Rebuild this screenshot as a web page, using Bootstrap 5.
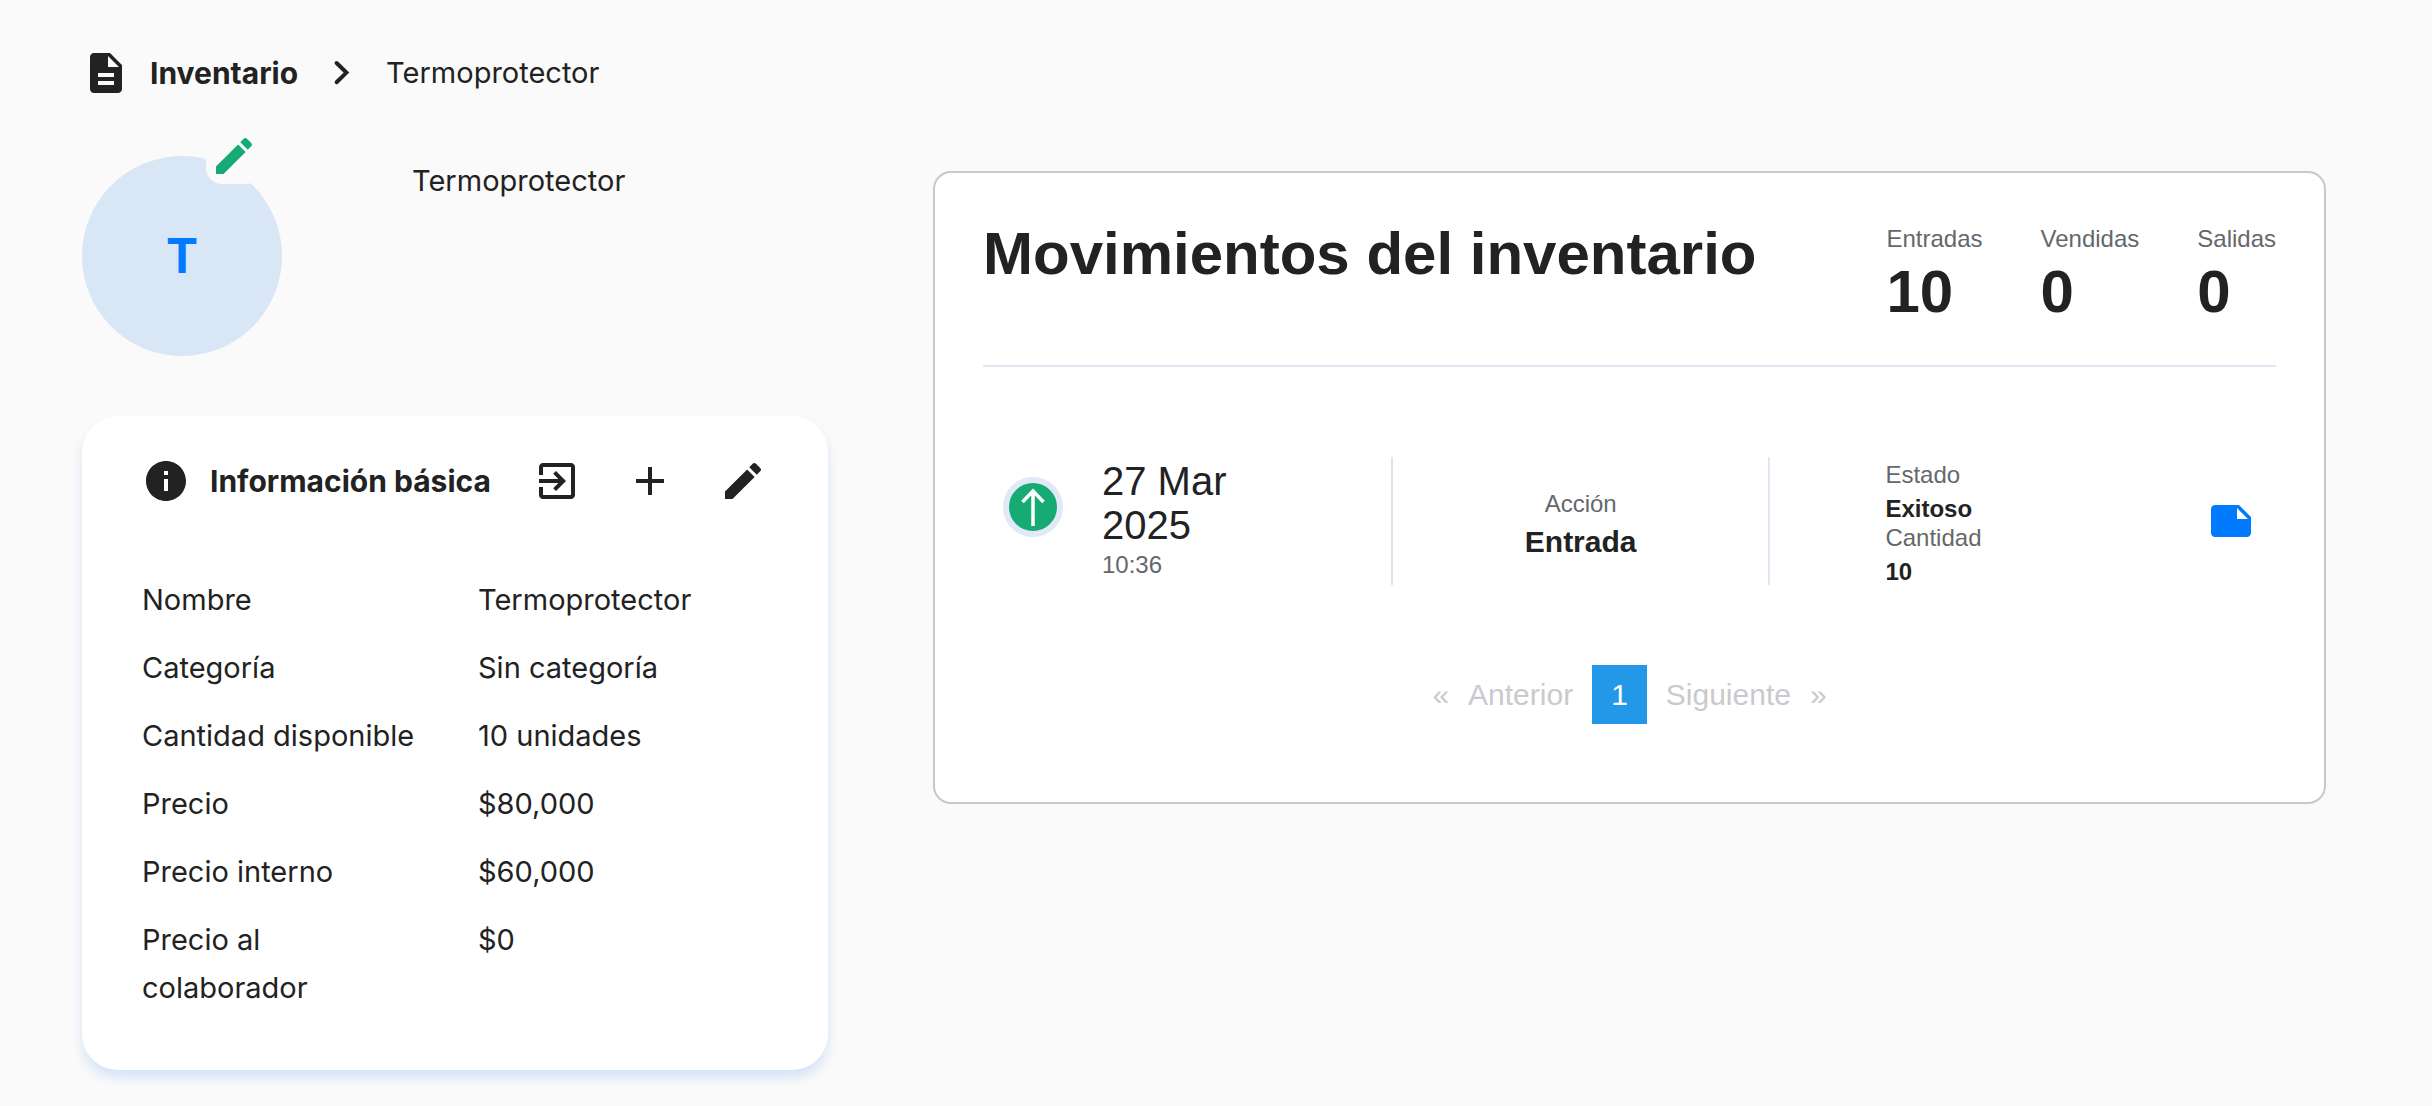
<!DOCTYPE html>
<html lang="es">
<head>
<meta charset="utf-8">
<meta name="viewport" content="width=device-width, initial-scale=1">
<title>Inventario - Termoprotector</title>
<link href="https://cdn.jsdelivr.net/npm/bootstrap@5.3.0/dist/css/bootstrap.min.css" rel="stylesheet">
<style>
  body { background: #fafafa; color: #222; font-family: Inter, "Liberation Sans", sans-serif; font-size: 29px; line-height: 48px; }
  .page { padding: 48px 106px 32px 82px; }
  .ico { width: 48px; height: 48px; fill: currentColor; display: block; flex: none; }
  .crumbs { gap: 20px; margin-bottom: 58px; line-height: 50px; }
  .crumbs a { color: inherit; text-decoration: none; }
  .strong-text { font-size: 30px; font-weight: 700; line-height: 50px; }
  .plain-btn { padding: 0; border: 0; background: none; color: inherit; }
  .profile { gap: 130px; margin-bottom: 60px; line-height: 50px; }
  .avatar { width: 200px; height: 200px; background: #d9e6f5; color: #007bff; font-size: 48px; flex: none; }
  .avatar-edit { top: -28px; right: 20px; padding: 4px; border-radius: 16px; background: #fafafa; color: #16ab74; }
  .info-card { border-radius: 36px; padding: 40px 61px 58px 60px; box-shadow: 0 8px 12px #d5e4f6; margin-right: 2px; }
  .info-head { gap: 20px; margin-bottom: 70px; }
  .info-actions { gap: 45px; }
  .data-list { gap: 20px; }
  .data-list dt { width: 336px; padding-right: 56px; }
  .moves-col { padding: 15px 0 0 103px; font-family: "Liberation Sans", Arial, sans-serif; }
  .moves { border: 2px solid #c8c8c8; border-radius: 18px; padding: 51px 48px 78px; }
  .moves-head { border-bottom: 2px solid #dfe7f1; padding-bottom: 43px; margin-bottom: 90px; }
  .big { font-size: 60px; line-height: 60px; font-weight: 700; }
  .stats { gap: 58px; }
  .tag-label { font-size: 24px; line-height: 30px; color: #65686b; }
  .stats .tag-label { margin-bottom: 8px; }
  .move { min-height: 128px; }
  .part-date { width: 31.7%; gap: 39px; padding-left: 20px; border-right: 2px solid #d5e5f3; }
  .part-action { width: 29.2%; padding-top: 9px; gap: 3px; border-right: 2px solid #dfe8f2; }
  .part-state { width: 39.1%; padding: 0 21px 0 115px; }
  .arrow { width: 60px; height: 60px; margin-top: 20px; border: 6px solid #e0e9f5; background: #16ab74; color: #fff; flex: none; }
  .day { font-size: 40px; line-height: 44px; }
  .hour { line-height: 36px; }
  .action-name { font-size: 30px; line-height: 40px; }
  .state-group { gap: 5px; padding-top: 4px; }
  .state-list { gap: 10px; font-size: 24px; line-height: 24px; }
  .state-list .tag-label { line-height: 24px; }
  .note { color: #007bff; }
  .pager { gap: 20px; margin-top: 80px; }
  .pager .page-link { padding: 0; border: 0; background: none; color: #c8cacd; font-size: 30px; line-height: 59px; }
  .pager .active .page-link { padding: 0 19px; background: #2398e9; color: #fff; }
</style>
</head>
<body>
<main class="container-fluid page">
  <nav class="crumbs d-flex align-items-center" aria-label="Ruta">
    <svg class="ico" viewBox="0 0 24 24"><path d="M14 2H6c-1.100 0-2 .9-2 2v16c0 1.100.890 2 1.990 2H18c1.100 0 2-.9 2-2V8l-6-6zm2 16H8v-2h8v2zm0-4H8v-2h8v2zm-3-5V3.500L18.500 9H13z"/></svg>
    <a class="strong-text" href="#">Inventario</a>
    <svg class="ico" viewBox="0 0 24 24"><path d="M9.300 7l4.900 4.800-4.900 4.800" fill="none" stroke="currentColor" stroke-width="2" stroke-linecap="round"/></svg>
    <span>Termoprotector</span>
  </nav>

  <div class="row g-0">
    <section class="col-4">
      <div class="profile d-flex">
        <div class="avatar position-relative rounded-circle d-flex align-items-center justify-content-center fw-bold">T
          <button type="button" class="plain-btn avatar-edit position-absolute" aria-label="Editar imagen">
            <svg class="ico" viewBox="0 0 24 24"><path d="M3 17.250V21h3.750L17.810 9.940l-3.750-3.750L3 17.250zM20.710 7.040c.39-.39.39-1.020 0-1.410l-2.340-2.340c-.39-.39-1.020-.39-1.410 0l-1.830 1.830 3.750 3.750 1.830-1.830z"/></svg>
          </button>
        </div>
        <div>Termoprotector</div>
      </div>

      <div class="info-card bg-white">
        <div class="info-head d-flex align-items-center">
          <svg class="ico" viewBox="0 0 24 24"><path d="M12 2C6.480 2 2 6.480 2 12s4.480 10 10 10 10-4.480 10-10S17.520 2 12 2zm1 15h-2v-6h2v6zm0-8h-2V7h2v2z"/></svg>
          <span class="strong-text">Información básica</span>
          <div class="info-actions d-flex ms-auto">
            <button type="button" class="plain-btn" aria-label="Salida"><svg class="ico" viewBox="0 0 24 24"><path d="M10.090 15.590L11.500 17l5-5-5-5-1.410 1.410L12.670 11H3v2h9.670l-2.580 2.590zM19 3H5c-1.110 0-2 .9-2 2v4h2V5h14v14H5v-4H3v4c0 1.100.890 2 2 2h14c1.100 0 2-.9 2-2V5c0-1.100-.9-2-2-2z"/></svg></button>
            <button type="button" class="plain-btn" aria-label="Agregar"><svg class="ico" viewBox="0 0 24 24"><path d="M19 13h-6v6h-2v-6H5v-2h6V5h2v6h6v2z"/></svg></button>
            <button type="button" class="plain-btn" aria-label="Editar"><svg class="ico" viewBox="0 0 24 24"><path d="M3 17.250V21h3.750L17.810 9.940l-3.750-3.750L3 17.250zM20.710 7.040c.39-.39.39-1.020 0-1.410l-2.340-2.340c-.39-.39-1.020-.39-1.410 0l-1.830 1.830 3.750 3.750 1.830-1.830z"/></svg></button>
          </div>
        </div>
        <dl class="data-list d-flex flex-column mb-0">
          <div class="d-flex"><dt class="fw-normal">Nombre</dt><dd class="mb-0">Termoprotector</dd></div>
          <div class="d-flex"><dt class="fw-normal">Categoría</dt><dd class="mb-0">Sin categoría</dd></div>
          <div class="d-flex"><dt class="fw-normal">Cantidad disponible</dt><dd class="mb-0">10 unidades</dd></div>
          <div class="d-flex"><dt class="fw-normal">Precio</dt><dd class="mb-0">$80,000</dd></div>
          <div class="d-flex"><dt class="fw-normal">Precio interno</dt><dd class="mb-0">$60,000</dd></div>
          <div class="d-flex"><dt class="fw-normal">Precio al colaborador</dt><dd class="mb-0">$0</dd></div>
        </dl>
      </div>
    </section>

    <section class="col-8 moves-col">
      <div class="moves bg-white">
        <div class="moves-head d-flex justify-content-between">
          <h1 class="big mb-0">Movimientos del inventario</h1>
          <div class="stats d-flex">
            <div><div class="tag-label">Entradas</div><div class="big">10</div></div>
            <div><div class="tag-label">Vendidas</div><div class="big">0</div></div>
            <div><div class="tag-label">Salidas</div><div class="big">0</div></div>
          </div>
        </div>

        <div class="move d-flex">
          <div class="part-date d-flex">
            <div class="arrow rounded-circle">
              <svg class="ico" viewBox="0 0 48 48"><path d="M24 43V9M13.500 19L24 8l10.500 11" fill="none" stroke="currentColor" stroke-width="3.500"/></svg>
            </div>
            <div class="align-self-center">
              <div class="day">27 Mar<br>2025</div>
              <div class="tag-label hour">10:36</div>
            </div>
          </div>
          <div class="part-action d-flex flex-column justify-content-center align-items-center">
            <div class="tag-label">Acción</div>
            <div class="action-name fw-bold">Entrada</div>
          </div>
          <div class="part-state d-flex align-items-center justify-content-between">
            <div class="state-group d-flex flex-column">
              <div class="state-list d-flex flex-column"><span class="tag-label">Estado</span><span class="fw-bold">Exitoso</span></div>
              <div class="state-list d-flex flex-column"><span class="tag-label">Cantidad</span><span class="fw-bold">10</span></div>
            </div>
            <button type="button" class="plain-btn note" aria-label="Nota"><svg class="ico" viewBox="0 0 24 24"><path d="M22 10l-6-6H4c-1.100 0-2 .9-2 2v12.010c0 1.100.9 1.990 2 1.990l16-.01c1.100 0 2-.89 2-1.990v-8zm-7-4.500l5.500 5.500H15V5.500z"/></svg></button>
          </div>
        </div>

        <nav aria-label="Paginación">
          <ul class="pager pagination justify-content-center mb-0">
            <li class="page-item"><a class="page-link" href="#" aria-label="Primera">«</a></li>
            <li class="page-item"><a class="page-link" href="#">Anterior</a></li>
            <li class="page-item active"><a class="page-link" href="#">1</a></li>
            <li class="page-item"><a class="page-link" href="#">Siguiente</a></li>
            <li class="page-item"><a class="page-link" href="#" aria-label="Última">»</a></li>
          </ul>
        </nav>
      </div>
    </section>
  </div>
</main>
<script src="https://cdn.jsdelivr.net/npm/bootstrap@5.3.0/dist/js/bootstrap.bundle.min.js"></script>
</body>
</html>
